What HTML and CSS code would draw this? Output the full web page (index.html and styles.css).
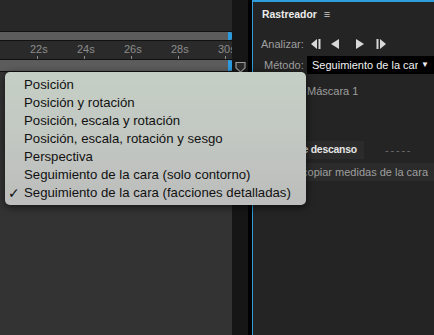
FILE: index.html
```html
<!DOCTYPE html>
<html>
<head>
<meta charset="utf-8">
<link rel="stylesheet" href="styles.css">
</head>
<body>
<div class="app">
  <div class="left">
    <div class="timeline">
      <div class="top-area"></div>
      <div class="bar bar-top"><span class="handle"></span></div>
      <div class="ruler">
        <span class="mark">22s</span>
        <span class="mark">24s</span>
        <span class="mark">26s</span>
        <span class="mark">28s</span>
        <span class="mark">30s</span>
      </div>
      <div class="bar bar-work"><span class="handle tall"></span></div>
      <div class="rest"></div>
    </div>
    <div class="gutter">
      <div class="gutter-top"></div>
      <svg class="shield" width="11" height="12" viewBox="0 0 11 12"><path d="M1 1.5 H10 V7 L5.5 11 L1 7 Z" fill="#2a2a2a" stroke="#9a9a9a" stroke-width="1.2"/></svg>
    </div>
    <div class="sep"></div>
  </div>
  <div class="right">
    <div class="title">Rastreador <span class="burger">≡</span></div>
    <div class="row analyze">
      <span class="lbl">Analizar:</span>
      <svg class="ctl c1" width="10" height="10" viewBox="0 0 10 10"><path d="M0 5 L6 0 V10 Z" fill="#d8d8d8"/><rect x="7.5" y="0" width="2" height="10" fill="#d8d8d8"/></svg>
      <svg class="ctl c2" width="10" height="10" viewBox="0 0 10 10"><path d="M1 5 L9 0 V10 Z" fill="#d8d8d8"/></svg>
      <svg class="ctl c3" width="10" height="10" viewBox="0 0 10 10"><path d="M9 5 L1 0 V10 Z" fill="#d8d8d8"/></svg>
      <svg class="ctl c4" width="10" height="10" viewBox="0 0 10 10"><rect x="0.5" y="0" width="2" height="10" fill="#d8d8d8"/><path d="M10 5 L4 0 V10 Z" fill="#d8d8d8"/></svg>
    </div>
    <div class="row method">
      <span class="lbl">Método:</span>
      <div class="select"><span class="sel-text">Seguimiento de la cara (facciones detalladas)</span><span class="arrow">▼</span></div>
    </div>
    <div class="row mask">Máscara 1</div>
    <div class="row rest-row">
      <div class="rest-box"><span class="rest-lbl">Establecer posición de descanso</span></div>
      <span class="dashes">-----</span>
    </div>
    <div class="row copy-row"><span>Extraer y copiar medidas de la cara</span></div>
  </div>
</div>
<div class="menu">
  <div class="item">Posición</div>
  <div class="item">Posición y rotación</div>
  <div class="item">Posición, escala y rotación</div>
  <div class="item">Posición, escala, rotación y sesgo</div>
  <div class="item">Perspectiva</div>
  <div class="item">Seguimiento de la cara (solo contorno)</div>
  <div class="item checked"><span class="check">✓</span>Seguimiento de la cara (facciones detalladas)</div>
</div>
</body>
</html>
```
FILE: styles.css
```css
html, body {
  margin: 0;
  padding: 0;
  width: 434px;
  height: 335px;
  overflow: hidden;
  background: #232323;
  font-family: "Liberation Sans", Arial, sans-serif;
}
.app {
  display: flex;
  height: 335px;
}
.left {
  display: flex;
  width: 252px;
  flex: none;
}
.timeline {
  width: 232px;
  display: flex;
  flex-direction: column;
  overflow: hidden;
}
.top-area {
  height: 31px;
  background: #282828;
}
.bar {
  position: relative;
  background: #5c5c5c;
  border-top: 1px solid #111;
  border-bottom: 1px solid #111;
}
.bar-top {
  height: 8px;
}
.handle {
  position: absolute;
  right: 0;
  top: 0;
  width: 4px;
  height: 100%;
  background: #2b9be0;
  border-radius: 0 2px 2px 0;
}
.ruler {
  height: 18px;
  background: #2a2a2a;
  display: flex;
  padding-left: 30px;
  gap: 32px;
  font-size: 11px;
  color: #8c8c8c;
  line-height: 17px;
}
.mark {
  position: relative;
  width: 15px;
}
.mark::after {
  content: "";
  position: absolute;
  left: 7px;
  top: 15px;
  width: 1px;
  height: 3px;
  background: #8c8c8c;
}
.bar-work {
  height: 11px;
}
.rest {
  flex: 1;
  background: #333333;
}
.gutter {
  width: 16px;
  background: #161616;
  display: flex;
  flex-direction: column;
  align-items: center;
}
.gutter-top {
  height: 61px;
  width: 100%;
}
.shield {
  display: block;
}
.sep {
  width: 4px;
  background: #000;
}
.right {
  flex: 1;
  min-width: 0;
  border-left: 1px solid #2d9ddb;
  border-top: 2px solid #2d9ddb;
  background: #242424;
  color: #9f9f9f;
  font-size: 11px;
  display: flex;
  flex-direction: column;
  overflow: hidden;
}
.title {
  color: #ececec;
  font-weight: bold;
  font-size: 10.4px;
  padding: 5px 0 0 9px;
  height: 18px;
  line-height: 14px;
}
.burger {
  color: #c8c8c8;
  font-weight: normal;
  font-size: 11px;
  margin-left: 4px;
}
.row {
  display: flex;
  align-items: center;
}
.analyze {
  margin-top: 11px;
  height: 16px;
  padding-left: 8px;
  font-size: 11px;
}
.analyze .lbl {
  margin-right: 7px;
}
.ctl.c1 { margin-right: 9px; }
.ctl.c2 { margin-right: 15px; }
.ctl.c3 { margin-right: 11px; }
.method {
  margin-top: 4px;
  height: 18px;
  padding-left: 11px;
  font-size: 11px;
}
.method .lbl {
  width: 43px;
  flex: none;
}
.select {
  flex: 1;
  min-width: 0;
  display: flex;
  align-items: center;
  background: #000;
  color: #f2f2f2;
  height: 18px;
  line-height: 18px;
  padding-left: 5px;
  font-size: 11px;
}
.sel-text {
  width: 106px;
  flex: none;
  white-space: nowrap;
  overflow: hidden;
}
.arrow {
  margin-left: 3px;
  font-size: 8px;
}
.mask {
  margin-top: 9px;
  padding-left: 54px;
  height: 16px;
  font-size: 11px;
}
.rest-row {
  margin-top: 42px;
  height: 18px;
  font-size: 11px;
}
.rest-box {
  width: 111px;
  flex: none;
  height: 18px;
  display: flex;
  justify-content: flex-end;
  background: #2b2b2b;
  padding-right: 7px;
  box-sizing: border-box;
}
.rest-lbl {
  flex: none;
  color: #e6e6e6;
  font-weight: bold;
  font-size: 10.4px;
  letter-spacing: -0.2px;
  line-height: 18px;
  white-space: nowrap;
}
.dashes {
  margin-left: 21px;
  color: #6e6e6e;
  letter-spacing: 1.8px;
}
.copy-row {
  margin-top: 4px;
  height: 18px;
  line-height: 18px;
  background: #2b2b2b;
  justify-content: flex-end;
  padding-right: 6px;
  font-size: 11px;
  white-space: nowrap;
}
.copy-row span {
  flex: none;
}
.menu {
  position: absolute;
  left: 5px;
  top: 72px;
  width: 301px;
  height: 133px;
  box-sizing: border-box;
  padding-top: 4px;
  border-radius: 5px;
  background: linear-gradient(180deg, #c5cfc5 0%, #c2c7c2 50%, #bcbdbc 100%);
  box-shadow: 0 2px 8px rgba(0,0,0,0.6);
  color: #111;
  font-size: 13.2px;
}
.item {
  position: relative;
  height: 18px;
  line-height: 18px;
  padding-left: 19px;
  white-space: nowrap;
}
.check {
  position: absolute;
  left: 3px;
  top: 0;
  font-family: "DejaVu Sans", sans-serif;
  font-size: 14px;
  font-weight: bold;
}
```
